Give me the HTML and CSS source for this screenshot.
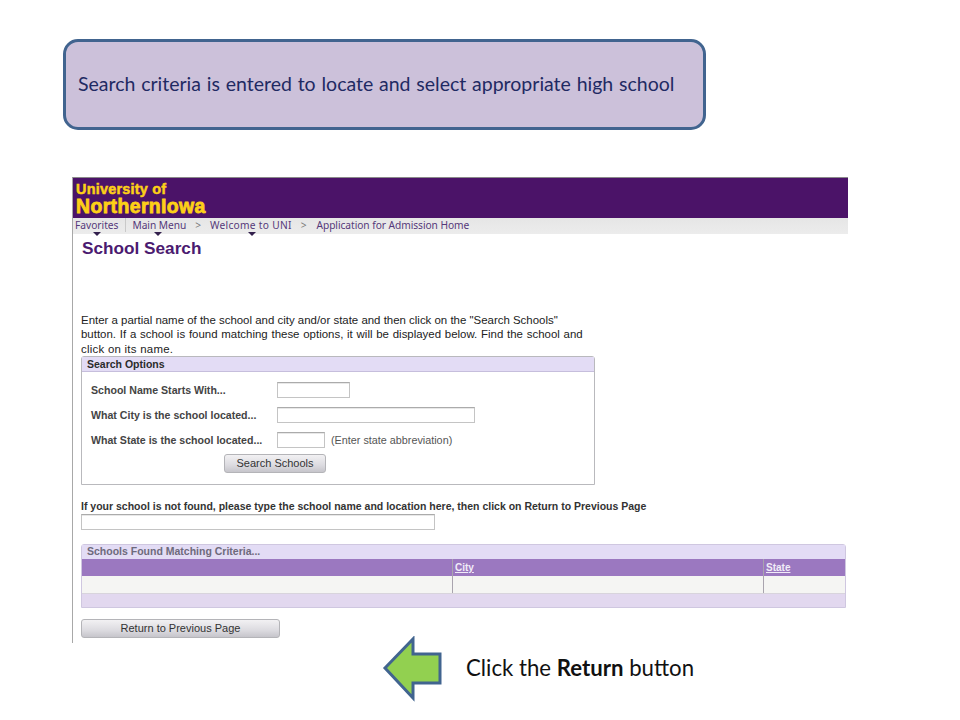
FILE: index.html
```html
<!DOCTYPE html>
<html lang="en">
<head>
<meta charset="utf-8">
<title>School Search</title>
<link rel="stylesheet" href="styles.css">
</head>
<body>
<main class="slide">
  <div class="callout">Search criteria is entered to locate and select appropriate high school</div>

  <section class="shot">
    <header class="brand">
      <div class="brand-top">University of</div>
      <div class="brand-main">NorthernIowa</div>
    </header>
    <nav class="nav">
      <span class="nav-item nav-fav">Favorites</span>
      <span class="nav-item nav-menu">Main Menu</span>
      <span class="sep">&gt;</span>
      <span class="nav-item nav-welcome">Welcome to UNI</span>
      <span class="sep">&gt;</span>
      <span class="nav-item nav-app">Application for Admission Home</span>
    </nav>
    <div class="content">
      <h1 class="title">School Search</h1>
      <p class="intro">Enter a partial name of the school and city and/or state and then click on the "Search Schools" <span class="intro-wide">button. If a school is found matching these options, it will be displayed below. Find the school and</span> <span class="intro-end">click on its name.</span></p>
      <div class="options">
        <div class="options-head">Search Options</div>
        <div class="options-body">
          <div class="row"><label class="lbl">School Name Starts With...</label><span class="input w-name"></span></div>
          <div class="row"><label class="lbl">What City is the school located...</label><span class="input w-city"></span></div>
          <div class="row"><label class="lbl">What State is the school located...</label><span class="input w-state"></span><span class="hint">(Enter state abbreviation)</span></div>
          <div class="btn-row"><span class="btn btn-search">Search Schools</span></div>
        </div>
      </div>
      <div class="notfound">If your school is not found, please type the school name and location here, then click on Return to Previous Page</div>
      <span class="input w-other"></span>
      <div class="grid">
        <div class="grid-title">Schools Found Matching Criteria...</div>
        <div class="grid-cols grid-headrow"><span class="cell"></span><span class="cell"><u>City</u></span><span class="cell"><u>State</u></span></div>
        <div class="grid-cols grid-bodyrow"><span class="cell"></span><span class="cell"></span><span class="cell"></span></div>
        <div class="grid-foot"></div>
      </div>
      <span class="btn btn-return">Return to Previous Page</span>
    </div>
  </section>

  <svg class="arrow" width="62" height="66" viewBox="0 0 62 66" aria-hidden="true">
    <path d="M3 32 L31 3 L31 18 L58 18 L58 47 L31 47 L31 62 Z" fill="#92d050" stroke="#41648f" stroke-width="3"/>
  </svg>
  <p class="caption">Click the <b>Return</b> button</p>
</main>
</body>
</html>
```

FILE: styles.css
```css
* { box-sizing: border-box; }
html, body { margin: 0; padding: 0; background: #fff; }
.slide { position: relative; width: 960px; height: 720px; overflow: hidden; font-family: "Liberation Sans", Arial, sans-serif; }

.callout {
  position: absolute; left: 63px; top: 39px; width: 643px; height: 91px;
  display: flex; align-items: center; padding: 0 0 2px 12px;
  background: #ccc1da; border: 3px solid #41648f; border-radius: 15px;
  font-family: Lato, Carlito, sans-serif; font-size: 19.5px; color: #1f2a63; word-spacing: .8px; white-space: nowrap;
}

.shot {
  position: absolute; left: 72px; top: 177px; width: 776px; height: 466px;
  border-top: 1px solid #8a8a8a; border-left: 1px solid #a8a8a8;
  display: flex; flex-direction: column;
}
.brand { height: 40px; background: #4b1368; padding: 4px 0 0 3px; color: #fdd017; font-weight: bold; line-height: 1; }
.brand-top { font-size: 14.4px; height: 14px; -webkit-text-stroke: 0.5px #fdd017; letter-spacing: .25px; }
.brand-main { font-size: 19.4px; margin-top: 1px; -webkit-text-stroke: 0.8px #fdd017; letter-spacing: .4px; }

.nav {
  height: 16px; padding-bottom: 2px; background: linear-gradient(#e6e6e6, #ececec);
  display: flex; align-items: center; font-family: "Noto Sans", sans-serif; font-size: 10.2px; color: #55397a; white-space: nowrap;
}
.nav-item { position: relative; }
.nav-fav { padding: 0 7px 0 2px; border-right: 1px solid #c9c9c9; margin-right: 6px; }
.nav-menu { letter-spacing: -.05px; }
.nav-welcome { letter-spacing: .28px; }
.nav-app { letter-spacing: -.05px; margin-left: 1px; }
.nav-fav::after, .nav-menu::after, .nav-welcome::after {
  content: ""; position: absolute; bottom: -4px; left: 20px;
  border: 4px solid transparent; border-top-color: #33204d; border-bottom: 0;
}
.nav-menu::after { left: 22px; }
.nav-welcome::after { left: 38px; }
.sep { margin: 0 9px; color: #777; }

.content { flex: 1; padding: 0 0 0 8px; display: flex; flex-direction: column; align-items: flex-start; }
.title { margin: 5px 0 0 1px; font-size: 17.2px; line-height: 18px; font-weight: bold; color: #4b1a70; }
.intro { margin: 56px 0 0; width: 512px; font-size: 11.45px; line-height: 14.3px; color: #222; }
.intro-wide { word-spacing: .6px; }
.intro-end { letter-spacing: .25px; }

.options { margin-top: 0; width: 514px; height: 129px; border: 1px solid #b9b9bd; border-radius: 3px 3px 0 0; display: flex; flex-direction: column; }
.options-head { height: 15px; background: #e3dcf5; border-bottom: 1px solid #c6bedc; padding-left: 5px; font-size: 10.5px; line-height: 14px; font-weight: bold; color: #2b2b2b; }
.options-body { padding: 10px 0 0 9px; display: flex; flex-direction: column; }
.row { height: 16px; margin-bottom: 9px; display: flex; align-items: center; }
.lbl { width: 186px; font-size: 10.6px; font-weight: bold; color: #444; white-space: nowrap; }
.input { display: block; height: 16px; background: #fff; border: 1px solid #c4c4c4; border-top-color: #ababab; box-shadow: inset 0 1px 0 #e8e8e8; }
.w-name { width: 73px; }
.w-city { width: 198px; }
.w-state { width: 48px; }
.w-other { width: 354px; margin-top: 2px; }
.hint { margin-left: 6px; font-size: 10.8px; color: #555; white-space: nowrap; }
.btn-row { padding-left: 133px; margin-top: -3px; }
.btn {
  display: flex; align-items: center; justify-content: center;
  background: linear-gradient(#f2f1f3 0%, #dcdbe0 60%, #c6c5cb 100%);
  border: 1px solid #b4b4b8; border-radius: 3px; font-size: 11px; color: #333; white-space: nowrap;
}
.btn-search { width: 102px; height: 19px; }

.notfound { margin-top: 15px; font-size: 10.5px; line-height: 12px; font-weight: bold; color: #333; white-space: nowrap; }

.grid { margin-top: 14px; width: 765px; height: 64px; border: 1px solid #cfc7e0; border-radius: 3px 3px 0 0; display: flex; flex-direction: column; }
.grid-title { height: 14px; background: #e3dcf5; padding-left: 5px; font-size: 10.5px; line-height: 13px; font-weight: bold; color: #6e6a7c; }
.grid-cols { display: grid; grid-template-columns: 370px 311px 1fr; }
.grid-headrow { height: 17px; background: #9b78c0; color: #f1ecf8; font-size: 10px; font-weight: bold; line-height: 17px; }
.grid-bodyrow { height: 18px; background: #f5f5f3; border-bottom: 1px solid #d8d4dc; }
.cell { border-left: 1px solid #a9a4ae; padding-left: 2px; }
.cell:first-child { border-left: 0; }
.grid-foot { flex: 1; background: #e2d8ef; }

.btn-return { margin-top: 11px; width: 199px; height: 19px; }

.arrow { position: absolute; left: 382px; top: 636px; }
.caption { position: absolute; left: 466px; top: 655px; margin: 0; font-family: Lato, Carlito, sans-serif; font-size: 22.2px; line-height: 26px; color: #111; white-space: nowrap; }
```
